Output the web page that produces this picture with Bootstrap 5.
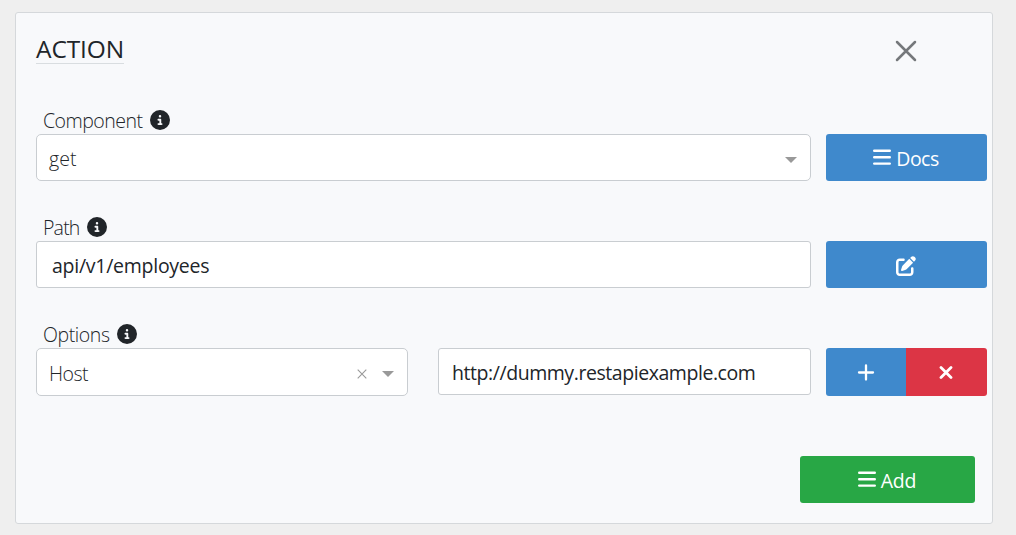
<!DOCTYPE html>
<html lang="en">
<head>
<meta charset="utf-8">
<meta name="viewport" content="width=device-width, initial-scale=1">
<title>Action</title>
<link href="https://cdn.jsdelivr.net/npm/bootstrap@5.3.0/dist/css/bootstrap.min.css" rel="stylesheet">
<style>
body{background:#efefef;font-family:"Open Sans","Noto Sans",sans-serif;font-size:19.5px;color:#212529;padding:12px 23px 0 15px;overflow:hidden}
.panel{height:512px;background:#f8f9fb;border:1px solid #d5d8db;border-radius:3px;padding:0 5px 0 20px}
.panel-head{height:93px;padding:22px 70px 0 0}
.panel-title{font-size:24.5px;line-height:28px;height:29px;border-bottom:1px solid #d9dde0;letter-spacing:-.1px;margin:0;font-weight:400}
.close-x{width:22px;height:22px;margin-top:5px}
.field-group{margin-bottom:32px}
.field-label{height:28px;line-height:28px;padding-left:7px;gap:7px;font-weight:300;letter-spacing:-.5px}
.field-label span{padding-top:2px}
.field-label .t-path{letter-spacing:-.8px}
.field-label .t-options{letter-spacing:-.4px}
.field-label svg{width:20px;height:20px}
.control{height:47px;background:#fff;border:1px solid #c9cdd1;border-radius:3px;padding-left:15px;line-height:48px;letter-spacing:-.26px}
.pick{border-radius:5px;padding:0 13px 0 12px;font-weight:300;line-height:49px}
.pick span:first-child{padding-top:2px}
.pick .caret{border:6px solid transparent;border-top-color:#999;border-bottom:0;margin-top:4px}
.t-get{letter-spacing:.1px}
.t-host{letter-spacing:-.5px}
.t-url{letter-spacing:-.44px}
.side{width:161px;margin-left:15px}
.tile{height:47px;border:0;border-radius:3px;font-size:19.5px;padding:0 1px 0 0;color:#fff;line-height:47px;letter-spacing:-.5px}
.tile span{padding-top:1px}
.tile-blue,.tile-blue:hover{background:#3f89cc;color:#fff}
.tile-red,.tile-red:hover{background:#dc3545;color:#fff}
.tile-green,.tile-green:hover{background:#28a745;color:#fff;width:175px;letter-spacing:-.3px}
.tall{height:48px}
.half{width:372px}
.value-box{margin-left:30px;padding-left:13px}
.clear-x{margin:4px 15px 0 0}
.foot{padding:60px 12px 0 0}
</style>
</head>
<body>
<svg class="d-none" xmlns="http://www.w3.org/2000/svg">
<symbol id="info" viewBox="0 0 512 512"><path fill="#212529" d="M256 512A256 256 0 1 0 256 0a256 256 0 1 0 0 512zM216 336h24V272H216c-13.3 0-24-10.7-24-24s10.7-24 24-24h48c13.3 0 24 10.7 24 24v88h8c13.3 0 24 10.7 24 24s-10.7 24-24 24H216c-13.3 0-24-10.7-24-24s10.7-24 24-24zm40-208a32 32 0 1 1 0 64 32 32 0 1 1 0-64z"/></symbol>
<symbol id="bars" viewBox="0 0 19 17"><path d="M1.2 1.8h15.6M1.2 8.3h15.6M1.2 14.6h15.6" stroke="#fff" stroke-width="2.4" stroke-linecap="round"/></symbol>
</svg>
<main class="panel">
  <header class="panel-head d-flex justify-content-between align-items-start">
    <h1 class="panel-title">ACTION</h1>
    <svg class="close-x" viewBox="0 0 22 22"><path d="M2 2l18 18M20 2L2 20" stroke="#75787b" stroke-width="2.5" stroke-linecap="round"/></svg>
  </header>

  <section class="field-group">
    <div class="field-label d-flex align-items-center"><span>Component</span><svg><use href="#info"/></svg></div>
    <div class="d-flex">
      <div class="control pick flex-grow-1 d-flex align-items-center justify-content-between"><span class="t-get">get</span><span class="caret"></span></div>
      <div class="side"><button class="btn tile tile-blue w-100 d-flex align-items-center justify-content-center"><svg class="me-1" width="19" height="17"><use href="#bars"/></svg><span>Docs</span></button></div>
    </div>
  </section>

  <section class="field-group">
    <div class="field-label d-flex align-items-center"><span class="t-path">Path</span><svg><use href="#info"/></svg></div>
    <div class="d-flex">
      <div class="control flex-grow-1">api/v1/employees</div>
      <div class="side"><button class="btn tile tile-blue w-100 d-flex align-items-center justify-content-center" aria-label="Edit"><svg width="20" height="20" viewBox="0 -24 512 512" fill="#fff" overflow="visible"><path d="M471.6 21.7c-21.9-21.9-57.3-21.9-79.2 0L362.3 51.7l97.9 97.9 30.1-30.1c21.9-21.9 21.9-57.3 0-79.2L471.6 21.7zm-299.2 220c-6.1 6.1-10.8 13.6-13.5 21.9l-29.6 88.8c-2.9 8.6-.6 18.1 5.8 24.6s15.9 8.7 24.6 5.8l88.8-29.6c8.2-2.7 15.7-7.4 21.9-13.5L437.7 172.3 339.7 74.3 172.4 241.7zM96 64C43 64 0 107 0 160V416c0 53 43 96 96 96H352c53 0 96-43 96-96V320c0-17.7-14.3-32-32-32s-32 14.3-32 32v96c0 17.7-14.3 32-32 32H96c-17.7 0-32-14.3-32-32V160c0-17.7 14.3-32 32-32h96c17.7 0 32-14.3 32-32s-14.3-32-32-32H96z"/></svg></button></div>
    </div>
  </section>

  <section>
    <div class="field-label d-flex align-items-center"><span class="t-options">Options</span><svg><use href="#info"/></svg></div>
    <div class="d-flex">
      <div class="control pick tall half d-flex align-items-center"><span class="t-host me-auto">Host</span><svg class="clear-x" width="10" height="10" viewBox="0 0 10 10"><path d="M.7.7l8.6 8.6M9.3.7L.7 9.3" stroke="#999" stroke-width="1.1"/></svg><span class="caret"></span></div>
      <div class="control value-box flex-grow-1"><span class="t-url">http://dummy.restapiexample.com</span></div>
      <div class="side btn-group">
        <button class="btn tile tall tile-blue w-50 d-flex align-items-center justify-content-center" aria-label="Add option"><svg width="18" height="18" viewBox="0 -1 18 18"><path d="M9 1.5v14M2 8.5h14" stroke="#fff" stroke-width="2.3" stroke-linecap="round"/></svg></button>
        <button class="btn tile tall tile-red w-50 d-flex align-items-center justify-content-center" aria-label="Remove option"><svg width="14" height="14" viewBox="0 -1 14 14"><path d="M2 1.5l10 10M12 1.5L2 11.5" stroke="#fff" stroke-width="2.8" stroke-linecap="round"/></svg></button>
      </div>
    </div>
  </section>

  <footer class="foot d-flex justify-content-end">
    <button class="btn tile tile-green d-flex align-items-center justify-content-center"><svg class="me-1" width="19" height="17"><use href="#bars"/></svg><span>Add</span></button>
  </footer>
</main>
<script src="https://cdn.jsdelivr.net/npm/bootstrap@5.3.0/dist/js/bootstrap.bundle.min.js"></script>
</body>
</html>
